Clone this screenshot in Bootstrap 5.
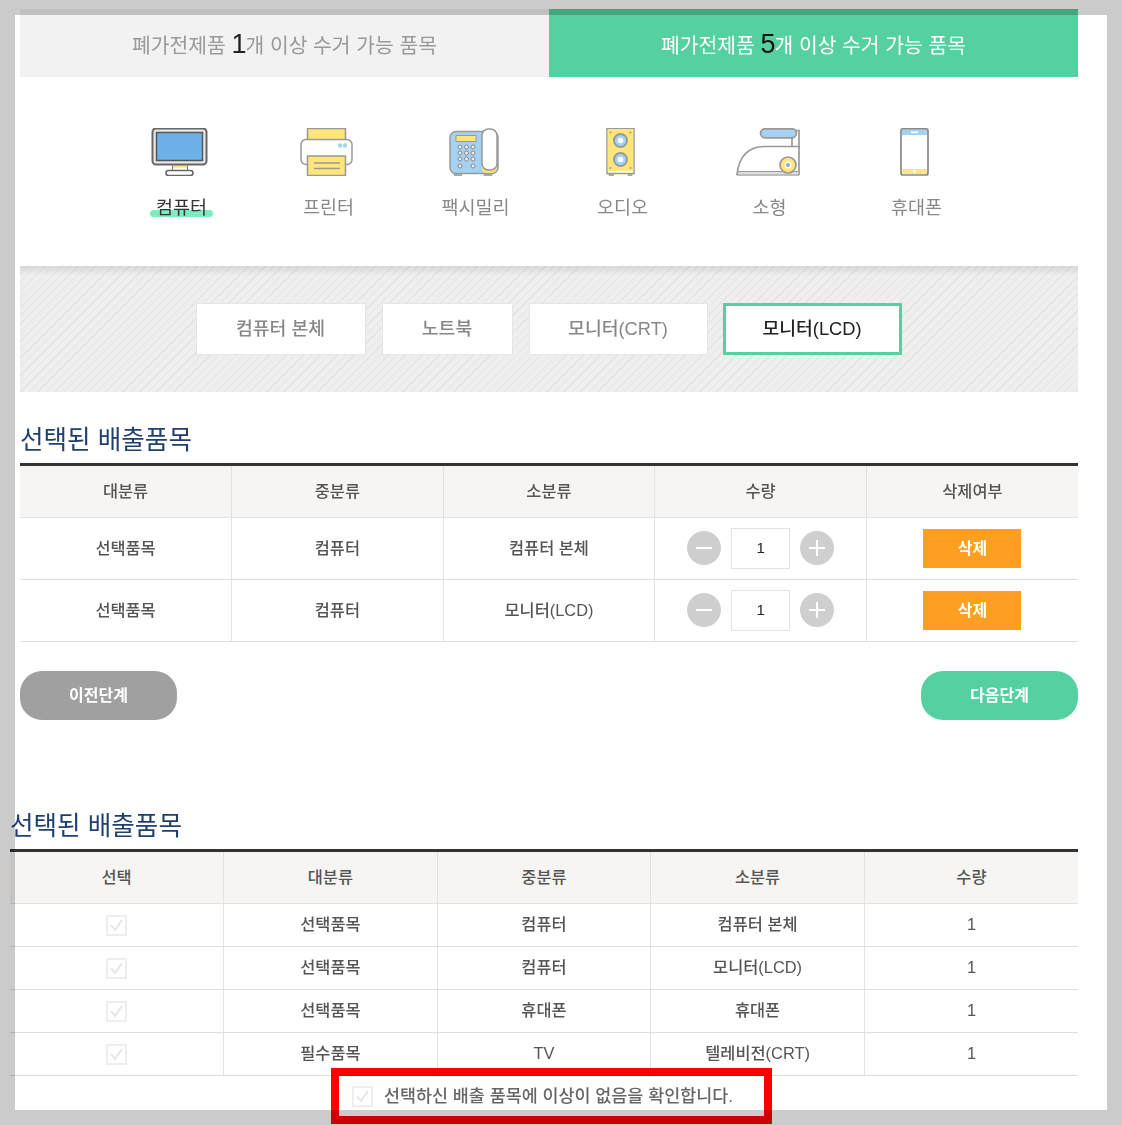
<!DOCTYPE html>
<html lang="ko">
<head>
<meta charset="utf-8">
<title>배출품목 선택</title>
<link rel="stylesheet" href="https://cdn.jsdelivr.net/npm/bootstrap@5.3.0/dist/css/bootstrap.min.css">
<style>
html,body{height:1125px;overflow:hidden}
body{background:#cbcbcb;font-family:"Liberation Sans","Noto Sans CJK KR",sans-serif;color:#555;font-size:16px}
.sheet{position:relative;margin:15px 15px 0;width:1092px;height:1095px;background:#fff;padding-left:5px;padding-top:.02px}
.blend{mix-blend-mode:multiply}
.tabbar{width:1058px;height:68px;position:relative;top:-6px;margin-bottom:-6px}
.tabbar>div{width:529px;font-size:20.4px;color:#999;background:#f2f2f2;padding-top:3px}
.tabbar>div.on{background:#55d0a0;color:#fff}
.tabbar b{font-weight:400;font-size:27px;color:#222;margin-right:-1px}
.tabbar .on b{color:#111}
.cats{height:189px;padding-left:88px;padding-top:51px}
.cat{width:147px;text-align:center;font-size:18.5px;color:#888;line-height:24px}
.ic{padding-right:4px;height:48px;margin-bottom:20px}
.cat svg{display:block;margin:0 auto}
.cat.on{color:#333}
.cat.on span{position:relative;display:inline-block}
.cat.on span::after{content:"";position:absolute;left:-6px;right:-6px;bottom:3px;height:7px;border-radius:3.5px;background:#7aeebc;z-index:-1}
.cat span{z-index:1}
.strip{width:1058px;height:126px;background:repeating-linear-gradient(135deg,#eee 0 5px,#e4e4e4 5px 6px);box-shadow:inset 0 8px 7px -4px rgba(0,0,0,.1);gap:16px}
.subbtn{background:#fff;border:1px solid #e6e6e6;height:52px;font-size:18.3px;color:#888;padding:0;border-radius:0;font-weight:500}
.subbtn.w1{width:170px}.subbtn.w2{width:131px}.subbtn.w3{width:179px}
.subbtn.on{border:3px solid #55d0a0;color:#222;margin:0 1px 0 -1px}
.ttl{height:71px;font-size:25.6px;color:#1f3f6d;font-weight:400;margin:0;padding-bottom:7px;line-height:1.2}
.tbl{table-layout:fixed;width:1058px;margin:0;border-top:3px solid #333;--bs-table-bg:transparent}
.tbl th,.tbl td{text-align:center;vertical-align:middle;padding:0;border-bottom:1px solid #dedede;border-right:1px solid #e2e2e2;font-size:16.4px;font-weight:500;color:#555;box-shadow:none}
.tbl th:last-child,.tbl td:last-child{border-right:0}
.tbl th{background:#f6f5f3;height:53px;border-bottom:1px solid #e2e2e2}
.tbl.first td{height:62px}
.tbl.second{width:1068px;margin-left:-10px;}
.tbl.second th{height:53px}
.tbl.second td{height:43px;padding-bottom:2px}
.qty{gap:10px;padding-bottom:1px}
.circ{width:34px;height:34px;border-radius:50%;background:#cfcfcf;display:block}
.num{width:59px;height:41px;border:1px solid #e2e2e2;color:#222;line-height:37px;font-size:15px}
.delbtn{width:98px;height:39px;background:#ff9f21;color:#fff;font-weight:700;border:0;border-radius:0;padding:0;font-size:16px}
.acts{width:1058px;margin-top:29px}
.stepbtn{width:157px;height:49px;border-radius:22px;border:0;color:#fff;font-weight:700;font-size:16px;padding:0}
.stepbtn.prev{background:#a0a0a0}.stepbtn.next{background:#55d0a0}
.ttl2{height:129px;margin-left:-10px;width:1068px;padding-bottom:7px}
.ck{display:inline-block;width:21px;height:21px;vertical-align:middle}
.redbox{position:absolute;left:316px;top:1053px;width:441px;height:56px;border:8px solid #f00;mix-blend-mode:multiply;gap:11px;padding-left:13px;font-size:17.4px;font-weight:500;color:#666;white-space:nowrap}
</style>
</head>
<body>
<div class="sheet">
  <div class="tabbar d-flex blend">
    <div class="d-flex align-items-center justify-content-center"><span>폐가전제품 <b>1</b>개 이상 수거 가능 품목</span></div>
    <div class="on d-flex align-items-center justify-content-center"><span>폐가전제품 <b>5</b>개 이상 수거 가능 품목</span></div>
  </div>

  <div class="cats d-flex">
    <div class="cat on">
      <div class="ic"><svg width="57" height="48" viewBox="0 0 57 48"><rect x="1.500" y=".5" width="54" height="36" rx="3.500" fill="#e8e8e8" stroke="#666" stroke-width="2"/><rect x="5.500" y="4.500" width="46" height="28" fill="#6cb2e8" stroke="#555" stroke-width="1.500"/><path d="M21.500 37.500h15v5h-15z" fill="#fff" stroke="#777"/><path d="M22 37.500h14v2H22z" fill="#ffe074"/><rect x="15" y="42.500" width="27" height="5" rx="2.500" fill="#fff" stroke="#666" stroke-width="1.600"/></svg></div>
      <span>컴퓨터</span>
    </div>
    <div class="cat">
      <div class="ic"><svg width="53" height="48" viewBox="0 0 53 48"><path d="M7.500.5h38v13h-38z" fill="#ffe67a" stroke="#999" stroke-width="1.500"/><rect x="1" y="11.500" width="51" height="25" rx="5" fill="#fff" stroke="#999" stroke-width="1.500"/><circle cx="40" cy="17.500" r="2.200" fill="#a5d2f2"/><circle cx="45" cy="17.500" r="2.200" fill="#a5d2f2"/><path d="M7.500 28h38v19.500h-38z" fill="#ffe67a" stroke="#999" stroke-width="1.500"/><path d="M14 35h26M14 40.500h26" stroke="#999" stroke-width="1.700"/></svg></div>
      <span>프린터</span>
    </div>
    <div class="cat">
      <div class="ic"><svg width="50" height="48" viewBox="0 0 50 48"><path d="M4 45h9v3H5zM34 45h10l-1 3h-8z" fill="#aaa"/><rect x="1" y="3.500" width="48" height="42" rx="6" fill="#a5d2f2" stroke="#999" stroke-width="1.500"/><path d="M33 36v5q0 4 4 4h6q5-1 5-5v-4z" fill="#ffe074"/><rect x="33" y="1" width="15" height="41" rx="6.500" fill="#fff" stroke="#999" stroke-width="1.500"/><rect x="7" y="7.500" width="20" height="6" fill="#ffe67a" stroke="#999"/><g fill="#e8eef2" stroke="#888"><circle cx="11" cy="19" r="2"/><circle cx="17.500" cy="19" r="2"/><circle cx="24" cy="19" r="2"/><circle cx="11" cy="25" r="2"/><circle cx="17.500" cy="25" r="2"/><circle cx="24" cy="25" r="2"/><circle cx="11" cy="31" r="2"/><circle cx="17.500" cy="31" r="2"/><circle cx="24" cy="31" r="2"/><circle cx="11" cy="38" r="2"/><circle cx="24" cy="38" r="2"/></g></svg></div>
      <span>팩시밀리</span>
    </div>
    <div class="cat">
      <div class="ic"><svg width="29" height="48" viewBox="0 0 29 48"><path d="M2 45h6v3H3zM21 45h6l-1 3h-4z" fill="#aaa"/><rect x="1" y=".5" width="27" height="45" fill="#fff" stroke="#999" stroke-width="1.500"/><rect x="1.700" y="1.200" width="25.600" height="41.800" fill="#ffe67a"/><g fill="#a5d2f2" stroke="#999" stroke-width="2"><circle cx="14.500" cy="12.500" r="6.500"/><circle cx="14.500" cy="31.500" r="6.500"/></g><circle cx="14.500" cy="12.500" r="2.800" fill="#fff"/><circle cx="14.500" cy="31.500" r="2.800" fill="#fff"/><g fill="#998"><circle cx="4.500" cy="4.500" r="1"/><circle cx="24.500" cy="4.500" r="1"/><circle cx="4.500" cy="40" r="1"/><circle cx="24.500" cy="40" r="1"/></g></svg></div>
      <span>오디오</span>
    </div>
    <div class="cat">
      <div class="ic"><svg width="64" height="48" viewBox="0 0 64 48"><path d="M56 2.500h7V19h-7z" fill="#fff" stroke="#999" stroke-width="1.700"/><rect x="24.500" y=".8" width="36" height="9" rx="4.500" fill="#a5d2f2" stroke="#999" stroke-width="1.700"/><path d="M1 46.500Q4 18.500 29 18.500H63V46.500z" fill="#fff" stroke="#999" stroke-width="1.700"/><path d="M2 43.500H63V47H1z" fill="#ddd" stroke="#999"/><circle cx="52" cy="37" r="8" fill="#ffe67a" stroke="#999" stroke-width="1.700"/><circle cx="52" cy="37" r="3.500" fill="#fff"/><circle cx="52" cy="37" r="2" fill="#8fa9bd"/></svg></div>
      <span>소형</span>
    </div>
    <div class="cat">
      <div class="ic"><svg width="29" height="48" viewBox="0 0 29 48"><rect x="1" y=".8" width="27" height="46.200" rx="2" fill="#fff" stroke="#888" stroke-width="1.700"/><path d="M2 1.700h25V7H2z" fill="#a5d2f2"/><path d="M11 4.300h7" stroke="#fff" stroke-width="1.500"/><path d="M2 41h25v5H2z" fill="#ffe67a"/><circle cx="14.500" cy="43.500" r="1.200" fill="#fff"/></svg></div>
      <span>휴대폰</span>
    </div>
  </div>

  <div class="strip d-flex align-items-center justify-content-center">
    <button type="button" class="btn subbtn w1">컴퓨터 본체</button>
    <button type="button" class="btn subbtn w2">노트북</button>
    <button type="button" class="btn subbtn w3">모니터(CRT)</button>
    <button type="button" class="btn subbtn w3 on">모니터(LCD)</button>
  </div>

  <h2 class="ttl d-flex align-items-end">선택된 배출품목</h2>
  <table class="table tbl first">
    <thead><tr><th>대분류</th><th>중분류</th><th>소분류</th><th>수량</th><th>삭제여부</th></tr></thead>
    <tbody>
      <tr><td>선택품목</td><td>컴퓨터</td><td>컴퓨터 본체</td>
        <td><div class="qty d-flex align-items-center justify-content-center"><svg class="circ" viewBox="0 0 34 34"><path d="M9 17h16" stroke="#fff" stroke-width="2"/></svg><span class="num">1</span><svg class="circ" viewBox="0 0 34 34"><path d="M9 17h16M17 9v16" stroke="#fff" stroke-width="2"/></svg></div></td>
        <td><button type="button" class="btn delbtn">삭제</button></td></tr>
      <tr><td>선택품목</td><td>컴퓨터</td><td>모니터(LCD)</td>
        <td><div class="qty d-flex align-items-center justify-content-center"><svg class="circ" viewBox="0 0 34 34"><path d="M9 17h16" stroke="#fff" stroke-width="2"/></svg><span class="num">1</span><svg class="circ" viewBox="0 0 34 34"><path d="M9 17h16M17 9v16" stroke="#fff" stroke-width="2"/></svg></div></td>
        <td><button type="button" class="btn delbtn">삭제</button></td></tr>
    </tbody>
  </table>

  <div class="acts d-flex justify-content-between">
    <button type="button" class="btn stepbtn prev">이전단계</button>
    <button type="button" class="btn stepbtn next">다음단계</button>
  </div>

  <h2 class="ttl ttl2 d-flex align-items-end blend">선택된 배출품목</h2>
  <table class="table tbl second blend">
    <thead><tr><th>선택</th><th>대분류</th><th>중분류</th><th>소분류</th><th>수량</th></tr></thead>
    <tbody>
      <tr><td><svg class="ck" viewBox="0 0 21 21"><rect x="1" y="1" width="19" height="19" fill="#fff" stroke="#eee" stroke-width="2"/><path d="M5 10l4 5 7-10" fill="none" stroke="#e6e6e6" stroke-width="2"/></svg></td><td>선택품목</td><td>컴퓨터</td><td>컴퓨터 본체</td><td>1</td></tr>
      <tr><td><svg class="ck" viewBox="0 0 21 21"><rect x="1" y="1" width="19" height="19" fill="#fff" stroke="#eee" stroke-width="2"/><path d="M5 10l4 5 7-10" fill="none" stroke="#e6e6e6" stroke-width="2"/></svg></td><td>선택품목</td><td>컴퓨터</td><td>모니터(LCD)</td><td>1</td></tr>
      <tr><td><svg class="ck" viewBox="0 0 21 21"><rect x="1" y="1" width="19" height="19" fill="#fff" stroke="#eee" stroke-width="2"/><path d="M5 10l4 5 7-10" fill="none" stroke="#e6e6e6" stroke-width="2"/></svg></td><td>선택품목</td><td>휴대폰</td><td>휴대폰</td><td>1</td></tr>
      <tr><td><svg class="ck" viewBox="0 0 21 21"><rect x="1" y="1" width="19" height="19" fill="#fff" stroke="#eee" stroke-width="2"/><path d="M5 10l4 5 7-10" fill="none" stroke="#e6e6e6" stroke-width="2"/></svg></td><td>필수품목</td><td>TV</td><td>텔레비전(CRT)</td><td>1</td></tr>
    </tbody>
  </table>

  <div class="redbox d-flex align-items-center"><svg class="ck" viewBox="0 0 21 21"><rect x="1" y="1" width="19" height="19" fill="#fff" stroke="#eee" stroke-width="2"/><path d="M5 10l4 5 7-10" fill="none" stroke="#e6e6e6" stroke-width="2"/></svg><span>선택하신 배출 품목에 이상이 없음을 확인합니다.</span></div>
</div>
</body>
</html>
